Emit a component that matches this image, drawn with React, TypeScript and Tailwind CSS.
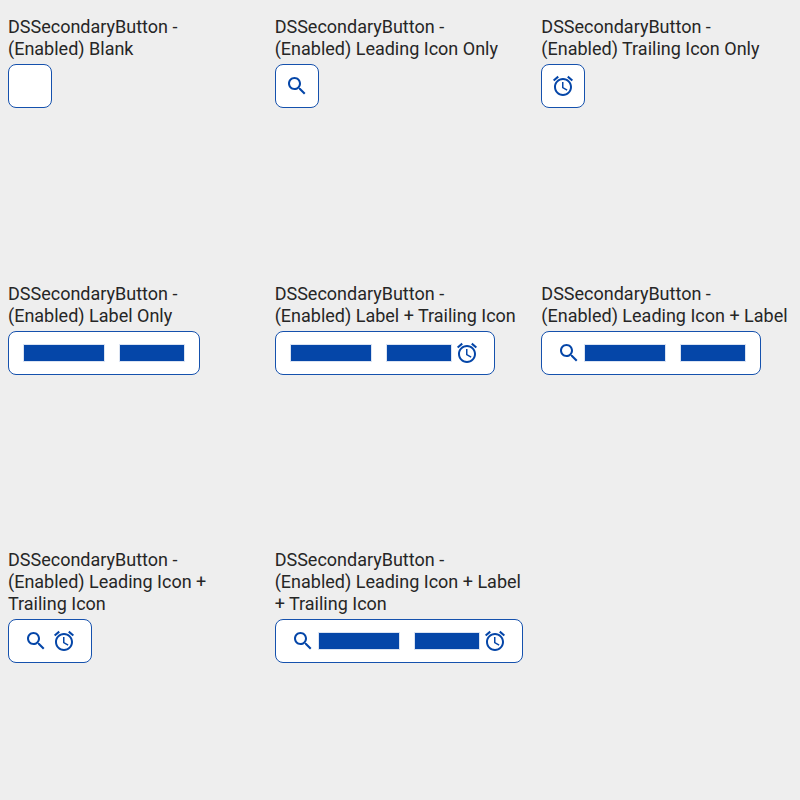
import React from "react";

const SearchIcon = () => (
  <svg viewBox="0 0 24 24" className="size-6 shrink-0" fill="#0546a8">
    <path d="M15.5 14h-.79l-.28-.27C15.41 12.59 16 11.11 16 9.5 16 5.91 13.09 3 9.5 3S3 5.91 3 9.5 5.91 16 9.5 16c1.61 0 3.09-.59 4.23-1.57l.27.28v.79l5 4.99L20.49 19l-4.99-5zm-6 0C7.01 14 5 11.99 5 9.5S7.01 5 9.5 5 14 7.01 14 9.5 11.99 14 9.5 14z" />
  </svg>
);

const AlarmIcon = () => (
  <svg viewBox="0 0 24 24" className="size-6 shrink-0" fill="#0546a8">
    <path d="M22 5.72l-4.6-3.86-1.29 1.53 4.6 3.86L22 5.72zM7.88 3.39L6.6 1.86 2 5.71l1.29 1.53 4.59-3.85zM12.5 8H11v6l4.75 2.85.75-1.23-4-2.37V8zM12 4c-4.97 0-9 4.03-9 9s4.02 9 9 9c4.97 0 9-4.03 9-9s-4.03-9-9-9zm0 16c-3.87 0-7-3.13-7-7s3.13-7 7-7 7 3.13 7 7-3.13 7-7 7z" />
  </svg>
);

const Label = () => (
  <span className="flex shrink-0 gap-4">
    <span className="h-4 w-20 bg-[#0546a8] shadow-[0_0_0_1px_#0546a826]" />
    <span className="h-4 w-16 bg-[#0546a8] shadow-[0_0_0_1px_#0546a826]" />
  </span>
);

type CellProps = { lines: string[]; leading?: boolean; label?: boolean; trailing?: boolean; box: string };

const Cell = ({ lines, leading, label, trailing, box }: CellProps) => (
  <div className="px-2 pt-4">
    <p className="text-[18px] leading-[22px] whitespace-nowrap text-[#262626]">
      {lines.map((l) => (
        <span key={l} className="block">{l}</span>
      ))}
    </p>
    <div className={`mt-1 flex h-11 items-center gap-1 rounded-lg border border-[#1551ad] bg-white ${box}`}>
      {leading && <SearchIcon />}
      {label && <Label />}
      {trailing && <AlarmIcon />}
    </div>
  </div>
);

const N = "DSSecondaryButton -";

export default function App() {
  return (
    <div className="grid h-[800px] w-[800px] grid-cols-3 grid-rows-3 bg-[#eeeeee] font-['Roboto',sans-serif]">
      <Cell lines={[N, "(Enabled) Blank"]} box="w-11" />
      <Cell lines={[N, "(Enabled) Leading Icon Only"]} leading box="w-11 justify-center" />
      <Cell lines={[N, "(Enabled) Trailing Icon Only"]} trailing box="w-11 justify-center" />
      <Cell lines={[N, "(Enabled) Label Only"]} label box="w-48 pl-[15px]" />
      <Cell lines={[N, "(Enabled) Label + Trailing Icon"]} label trailing box="w-[220px] pl-[15px]" />
      <Cell lines={[N, "(Enabled) Leading Icon + Label"]} leading label box="w-[220px] pl-[15px]" />
      <Cell lines={[N, "(Enabled) Leading Icon +", "Trailing Icon"]} leading trailing box="w-[84px] pl-[15px]" />
      <Cell lines={[N, "(Enabled) Leading Icon + Label", "+ Trailing Icon"]} leading label trailing box="w-[248px] pl-[15px]" />
    </div>
  );
}
